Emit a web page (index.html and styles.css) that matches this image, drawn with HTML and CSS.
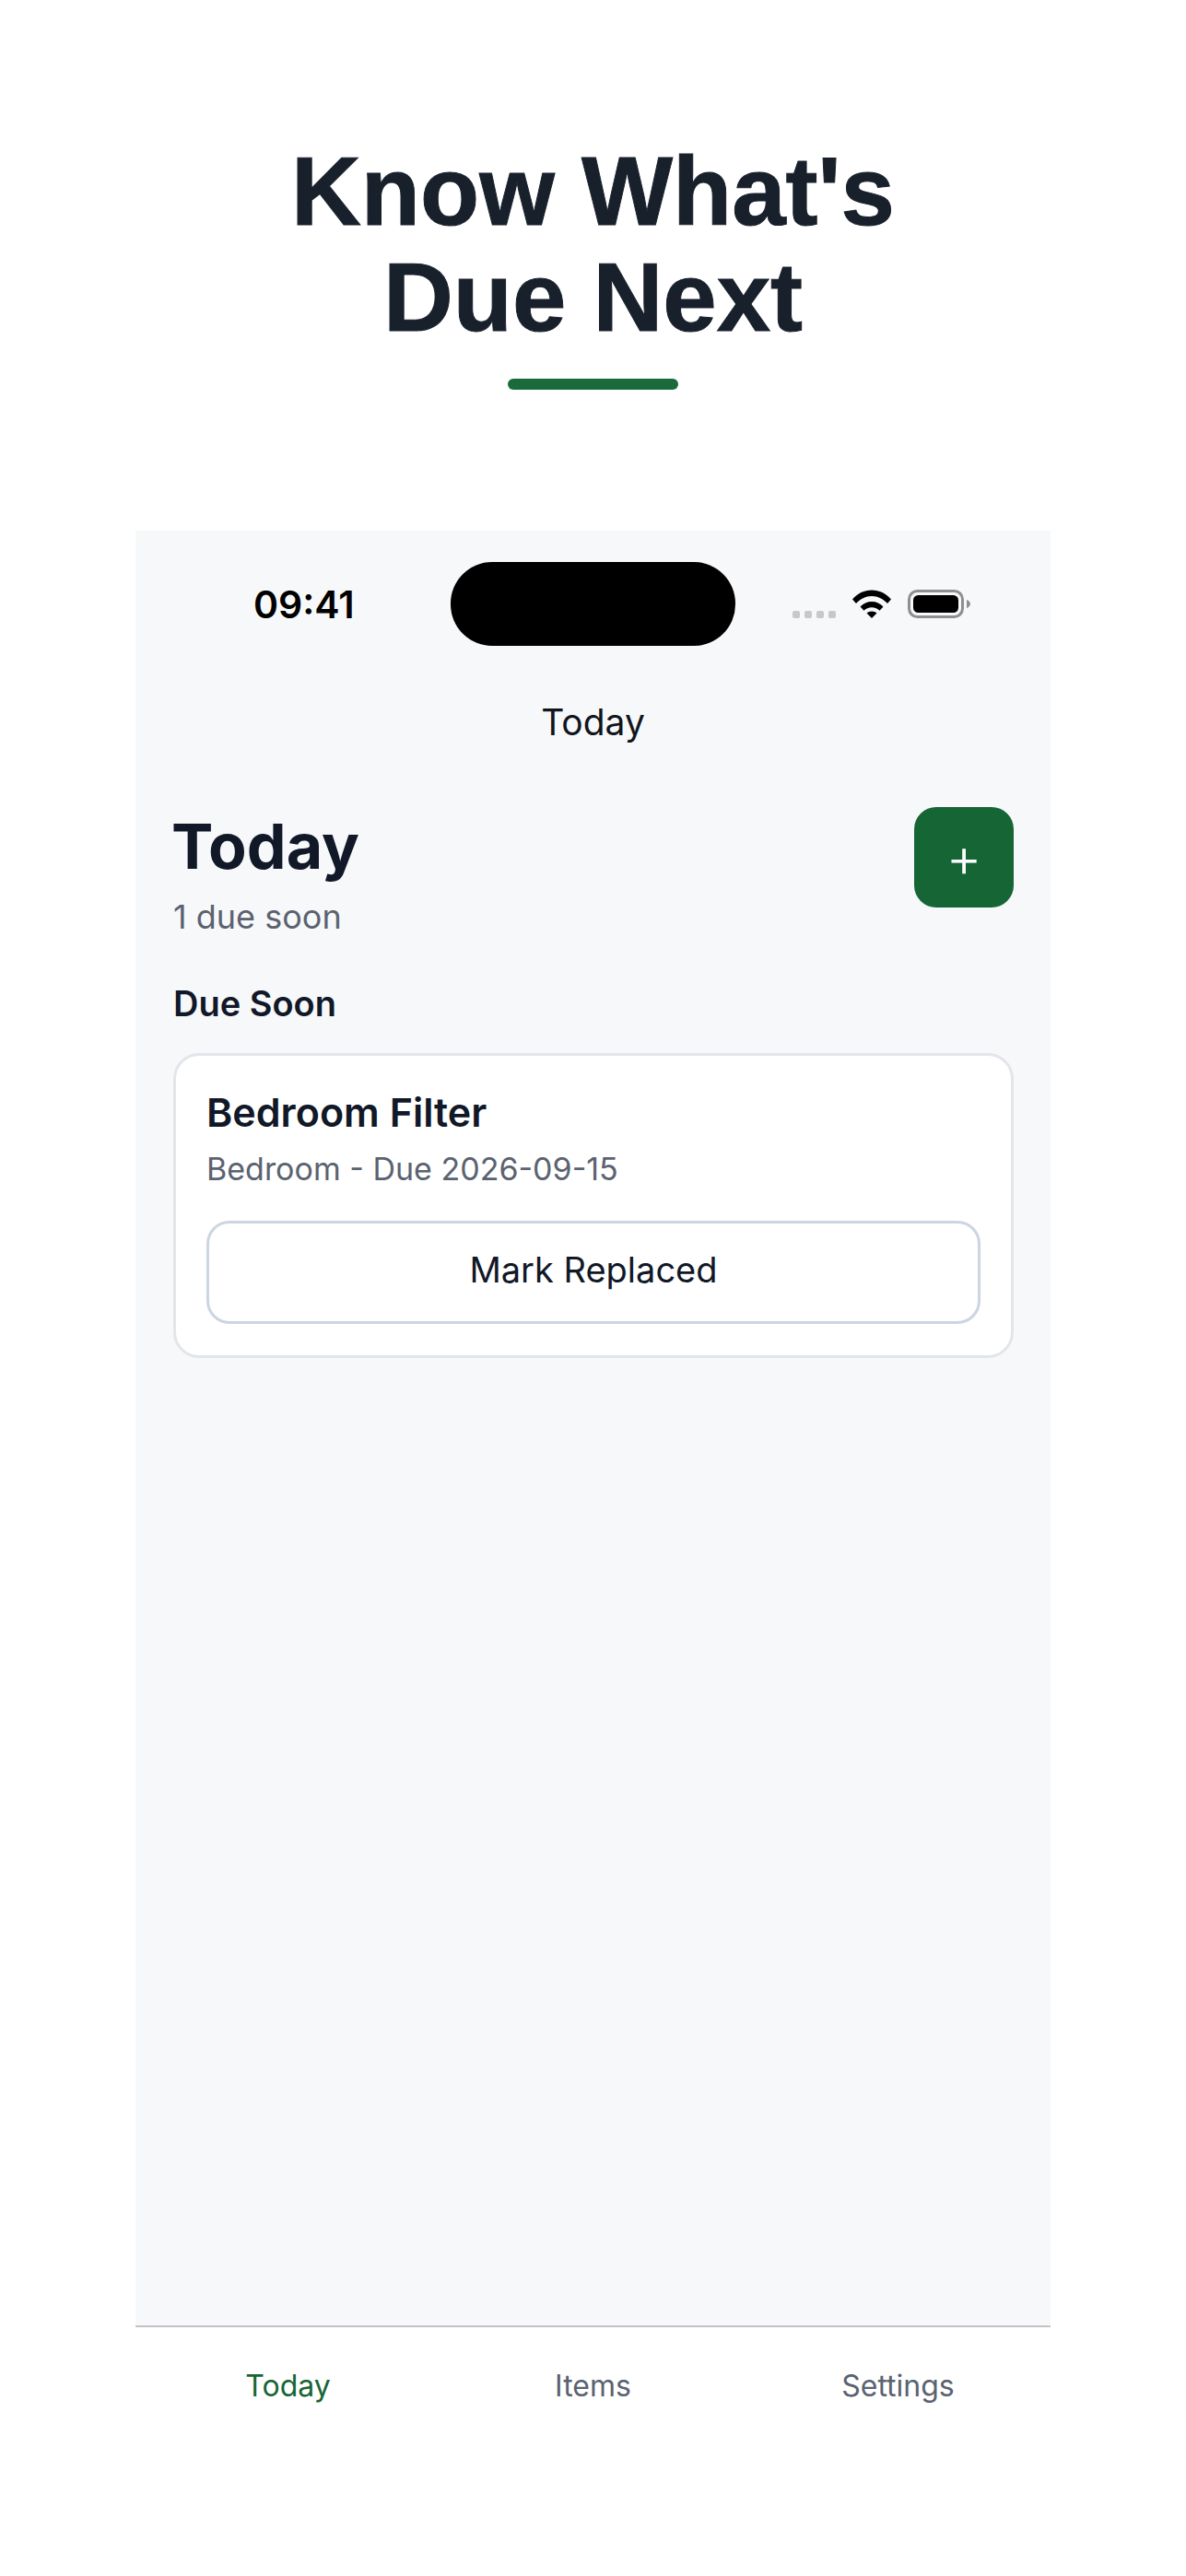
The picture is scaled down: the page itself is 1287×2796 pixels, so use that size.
FILE: index.html
```html
<!DOCTYPE html>
<html lang="en">
<head>
<meta charset="utf-8">
<title>Know What's Due Next</title>
<link rel="stylesheet" href="styles.css">
</head>
<body>
<main class="page">
  <header class="hero">
    <h1 class="hero-title">Know What's<br>Due Next</h1>
    <div class="hero-bar"></div>
  </header>
  <section class="phone">
    <div class="status">
      <div class="status-time">09:41</div>
      <div class="island"></div>
      <div class="status-icons">
        <div class="signal"><i></i><i></i><i></i><i></i></div>
        <svg class="wifi" width="42" height="31" viewBox="0 0 42 31"><path d="M0 10.5C5.5 4 13 .5 21 .5s15.500 3.500 21 10l-4 4.500C33.500 10 27.500 7 21 7S8.500 10 4 15z"/><path d="M8.500 18.500C11.700 15 16 13 21 13s9.300 2 12.500 5.500l-4 4.300C27.300 20.500 24.300 19.300 21 19.300s-6.300 1.200-8.500 3.500z"/><path d="M15.500 25.500c1.400-1.300 3.400-2.100 5.500-2.100s4.100.8 5.500 2.100L21 31z"/></svg>
        <svg class="battery" width="68" height="31" viewBox="0 0 68 31"><rect x="1.500" y="1.500" width="58" height="28" rx="9" fill="none" stroke="#8f8f8f" stroke-width="3"/><rect x="6" y="6" width="49" height="19" rx="5.500"/><path d="M64 11c2.500 1 4 2.600 4 4.500S66.500 19 64 20z" fill="#8f8f8f"/></svg>
      </div>
    </div>
    <div class="navtitle">Today</div>
    <div class="content">
      <div class="head">
        <div>
          <h2 class="head-title">Today</h2>
          <p class="head-sub">1 due soon</p>
        </div>
        <button class="add">+</button>
      </div>
      <h3 class="section">Due Soon</h3>
      <article class="card">
        <h4 class="card-title">Bedroom Filter</h4>
        <p class="card-sub">Bedroom - Due 2026-09-15</p>
        <button class="mark">Mark Replaced</button>
      </article>
    </div>
    <nav class="tabs">
      <a class="tab tab-active">Today</a>
      <a class="tab">Items</a>
      <a class="tab">Settings</a>
    </nav>
  </section>
</main>
</body>
</html>
```
FILE: styles.css
```css
* { box-sizing: border-box; }
html, body { margin: 0; padding: 0; background: #fff; }
.page {
  width: 1287px;
  height: 2796px;
  display: flex;
  flex-direction: column;
  align-items: center;
}
.hero {
  display: flex;
  flex-direction: column;
  align-items: center;
  padding-top: 150px;
}
.hero-title {
  margin: 0;
  font: 700 105px/115px "Liberation Sans", Arial, sans-serif;
  color: #18202b;
  text-align: center;
  -webkit-text-stroke: 1px #18202b;
}
.hero-bar {
  width: 185px;
  height: 12px;
  margin-top: 31px;
  border-radius: 6px;
  background: #1a6b3c;
}
.phone {
  width: 993px;
  flex: 1;
  margin-top: 153px;
  display: flex;
  flex-direction: column;
  background: #f7f8fa;
  font-family: Inter, sans-serif;
}
.status {
  display: grid;
  grid-template-columns: 1fr 309px 1fr;
  align-items: center;
  padding-top: 34px;
}
.status-time {
  padding-left: 128px;
  font-size: 41px;
  font-weight: 600;
  line-height: 50px;
  color: #000;
}
.island {
  height: 91px;
  border-radius: 45px;
  background: #000;
}
.status-icons {
  display: flex;
  align-items: flex-end;
  justify-content: flex-end;
  gap: 18px;
  padding-right: 87px;
}
.signal {
  display: flex;
  gap: 5px;
}
.signal i {
  width: 8px;
  height: 8px;
  border-radius: 2px;
  background: #c8c8c8;
}
.wifi, .battery { display: block; }
.navtitle {
  margin-top: 59px;
  font-size: 39px;
  line-height: 48px;
  text-align: center;
  color: #11151c;
}
.content {
  flex: 1;
  padding: 68px 40px 0 41px;
}
.head {
  display: flex;
  justify-content: space-between;
  align-items: flex-start;
}
.head-title {
  margin: 0 0 0 -2px;
  font-size: 68px;
  font-weight: 700;
  line-height: 84px;
  color: #111827;
}
.head-sub {
  margin: 13px 0 0;
  font-size: 36px;
  line-height: 44px;
  color: #5b6270;
}
.add {
  width: 108px;
  height: 109px;
  padding: 0;
  border: 0;
  border-radius: 24px;
  background: #166534;
  color: #fff;
  font: 300 60px/105px Inter, sans-serif;
}
.section {
  margin: 48px 0 0;
  font-size: 38px;
  font-weight: 600;
  line-height: 48px;
  color: #111827;
}
.card {
  margin-top: 30px;
  height: 331px;
  padding: 34px 33px;
  border: 3px solid #e2e5ea;
  border-radius: 28px;
  background: #fff;
}
.card-title {
  margin: 0;
  font-size: 43px;
  font-weight: 600;
  line-height: 54px;
  color: #111827;
}
.card-sub {
  margin: 14px 0 0;
  font-size: 34px;
  line-height: 42px;
  color: #5b6270;
}
.mark {
  display: block;
  width: 100%;
  height: 112px;
  margin-top: 35px;
  padding-bottom: 8px;
  border: 3px solid #ccd5e0;
  border-radius: 25px;
  background: #fff;
  color: #111827;
  font: 400 38px/1 Inter, sans-serif;
}
.tabs {
  display: grid;
  grid-template-columns: repeat(3, 1fr);
  height: 272px;
  padding-top: 44px;
  border-top: 2px solid #c4c4c8;
  background: #fff;
}
.tab {
  font-size: 32px;
  line-height: 40px;
  text-align: center;
  color: #5b6270;
}
.tab-active { color: #166534; }
```
